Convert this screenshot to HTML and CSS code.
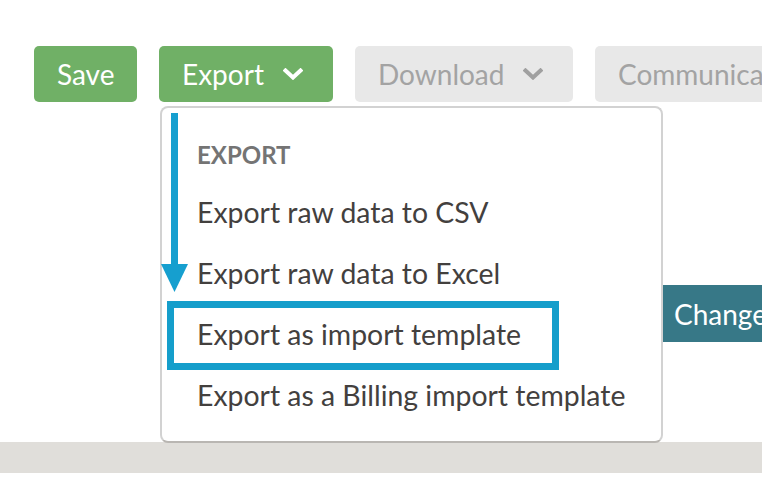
FILE: index.html
```html
<!DOCTYPE html>
<html>
<head>
<meta charset="utf-8">
<link rel="stylesheet" href="styles.css">
</head>
<body>
<div class="page">
  <div class="toolbar">
    <button class="btn btn-green btn-save">Save</button>
    <button class="btn btn-green btn-export">Export <svg class="chev" viewBox="0 0 20 12"><path d="M2.5 2.5 L10 9.5 L17.5 2.5" /></svg></button>
    <button class="btn btn-grey btn-download">Download <svg class="chev" viewBox="0 0 20 12"><path d="M2.5 2.5 L10 9.5 L17.5 2.5" /></svg></button>
    <button class="btn btn-grey btn-comm">Communications</button>
  </div>
  <div class="content">
    <button class="btn-change">Change</button>
  </div>
  <div class="greybar"></div>

  <div class="dropdown">
    <div class="dd-header">EXPORT</div>
    <div class="dd-item">Export raw data to CSV</div>
    <div class="dd-item">Export raw data to Excel</div>
    <div class="dd-item">Export as import template</div>
    <div class="dd-item">Export as a Billing import template</div>
    <div class="highlight"></div>
  </div>
  <svg class="arrow" viewBox="0 0 28 180" width="28" height="180">
    <rect x="10" y="0" width="7" height="153" fill="#169fcf"/>
    <polygon points="0,151 27,151 13.5,179" fill="#169fcf"/>
  </svg>
</div>
</body>
</html>
```
FILE: styles.css
```css
* { box-sizing: border-box; }
html, body { margin: 0; padding: 0; background: #fff; overflow: hidden; }
body { width: 762px; height: 498px; font-family: "Lato", "Liberation Sans", sans-serif; }
.page { position: relative; width: 762px; height: 498px; overflow: hidden; }

.toolbar {
  display: flex;
  gap: 22px;
  padding: 46px 0 0 34px;
  white-space: nowrap;
}
.btn {
  height: 56px;
  border: none;
  border-radius: 5px;
  font-family: "Lato", sans-serif;
  font-size: 28px;
  display: flex;
  align-items: center;
  flex-shrink: 0;
  padding: 0 23px;
  overflow: hidden;
}
.btn-green { background: #70b066; color: #fff; }
.btn-grey { background: #e8e8e8; color: #a3a3a3; }
.btn-save { width: 103px; }
.btn-export { width: 174px; }
.btn-download { width: 218px; }
.chev { width: 20px; height: 12px; margin-left: 19px; flex-shrink: 0; fill: none; stroke: currentColor; stroke-width: 4; stroke-linecap: square; }
.btn-grey .chev { stroke: #a0a0a0; }

.content { height: 340px; padding-top: 183px; }
.btn-change {
  margin-left: 662px;
  height: 57px;
  width: 160px;
  border: none;
  background: #377887;
  color: #fff;
  font-family: "Lato", sans-serif;
  font-size: 28px;
  text-align: left;
  padding: 0 0 0 12px;
  display: block;
  white-space: nowrap;
}
.greybar { height: 31px; background: #e0deda; }

.dropdown {
  position: absolute;
  left: 160px;
  top: 106px;
  width: 503px;
  height: 337px;
  background: #fff;
  border: 2px solid #d2d2d2;
  border-bottom-color: #b9b6b2;
  border-radius: 8px;
  padding: 31px 0 0 35px;
  white-space: nowrap;
}
.dd-header {
  font-size: 24px;
  font-weight: bold;
  color: #747474;
  height: 31px;
  line-height: 31px;
  margin-bottom: 12px;
}
.dd-item {
  font-size: 28.4px;
  color: #43403e;
  height: 61px;
  line-height: 61px;
}
.highlight {
  position: absolute;
  left: 5px;
  top: 193px;
  width: 392px;
  height: 69px;
  border: 7px solid #159ecb;
}
.arrow { position: absolute; left: 161px; top: 113px; }
```
